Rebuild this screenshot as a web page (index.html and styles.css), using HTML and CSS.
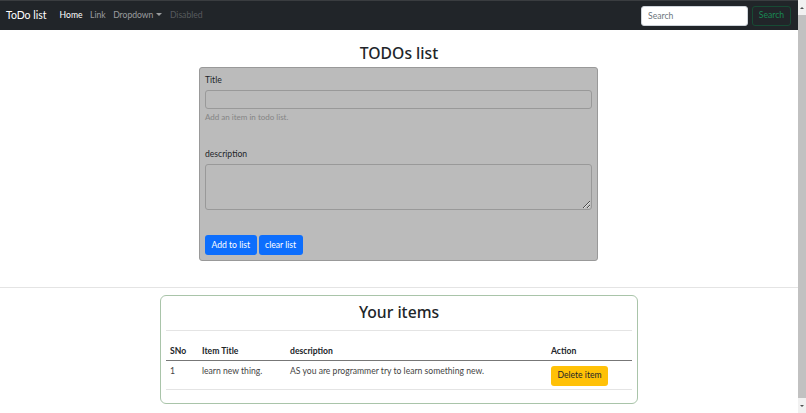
FILE: index.html
```html
<!DOCTYPE html>
<html lang="en">
<head>
<meta charset="utf-8">
<title>ToDo list</title>
<link rel="stylesheet" href="styles.css">
</head>
<body>
<div class="page">
  <nav class="navbar">
    <a class="brand">ToDo list</a>
    <ul class="nav">
      <li class="active">Home</li>
      <li>Link</li>
      <li class="dropdown">Dropdown<span class="caret"></span></li>
      <li class="disabled">Disabled</li>
    </ul>
    <form class="search">
      <input class="search-input" placeholder="Search">
      <button type="button" class="search-btn">Search</button>
    </form>
  </nav>
  <main>
    <h1>TODOs list</h1>
    <form class="todo-form">
      <label class="label">Title</label>
      <input class="field">
      <div class="help">Add an item in todo list.</div>
      <label class="label desc-label">description</label>
      <textarea class="field area"></textarea>
      <div class="actions">
        <button type="button" class="btn">Add to list</button>
        <button type="button" class="btn">clear list</button>
      </div>
    </form>
    <hr class="divider">
    <section class="items">
      <h2>Your items</h2>
      <hr class="inner">
      <table>
        <thead>
          <tr><th class="c1">SNo</th><th class="c2">Item Title</th><th class="c3">description</th><th>Action</th></tr>
        </thead>
        <tbody>
          <tr><td>1</td><td>learn new thing.</td><td>AS you are programmer try to learn something new.</td><td class="action-cell"><button type="button" class="btn warn">Delete item</button></td></tr>
        </tbody>
      </table>
    </section>
  </main>
</div>
<aside class="scrollbar">
  <span class="arrow up"></span>
  <span class="thumb"></span>
  <span class="arrow down"></span>
</aside>
</body>
</html>
```
FILE: styles.css
```css
* { box-sizing: border-box; }
html, body { margin: 0; height: 413px; overflow: hidden; }
body { display: flex; background: #fff; color: #212529; font: 8.6px/12.75px Lato, "Open Sans", sans-serif; }
.page { width: 798px; flex: none; }
.navbar { height: 30px; background: #212529; border-top: 1px solid #3a3d40; display: flex; align-items: center; padding: 0 7px 0 6px; }
.brand { color: #fff; font-size: 10.5px; margin-right: 13px; }
.nav { display: flex; list-style: none; margin: 0; padding: 0; gap: 7.5px; color: rgba(255,255,255,.55); }
.nav .active { color: #fff; }
.nav .disabled { color: rgba(255,255,255,.25); }
.caret { display: inline-block; margin-left: 3px; vertical-align: 2px; border: 3px solid transparent; border-top-color: currentColor; border-bottom: 0; }
.search { display: flex; gap: 4px; margin-left: auto; }
.search-input { width: 107px; height: 20px; border: 1px solid #ced4da; border-radius: 3px; padding: 0 6px; font: inherit; }
.search-input::placeholder { color: #6c757d; }
.search-btn { width: 39px; height: 20px; background: transparent; border: 1px solid #174a34; border-radius: 3px; color: #198754; font: inherit; padding: 0; }
h1, h2 { font-family: "Noto Sans", "Open Sans", sans-serif; font-weight: 500; margin: 0; text-align: center; line-height: 21px; }
h1 { padding-top: 13px; height: 37px; font-size: 15.7px; }
.todo-form { width: 399px; height: 194px; margin: 0 0 0 199px; background: #bbb; border: 1px solid #999; border-radius: 3px; padding: 5px; display: flex; flex-direction: column; }
.label { display: block; height: 17px; padding-top: 1px; }
.field { display: block; width: 100%; height: 19px; background: #bbb; border: 1px solid #999; border-radius: 3px; flex: none; }
.help { color: #858585; font-size: 8px; margin-top: 2px; height: 29px; }
.desc-label { margin-top: 7px; padding-top: 1px; }
.area { height: 46px; }
.actions { display: flex; gap: 2px; margin-top: 25px; }
.btn { background: #0d6efd; border: 0; border-radius: 3px; color: #fff; font: inherit; padding: 0 6.5px; height: 20px; }
.divider { margin: 26px 0 7px; border: 0; border-top: 1px solid #e4e4e4; }
.items { width: 478px; height: 109px; margin-left: 160px; border: 1px solid #a9c4a9; border-radius: 6px; padding: 0 5px; }
h2 { padding-top: 6px; height: 34px; font-size: 15.7px; }
.inner { margin: 0; border: 0; border-top: 1px solid #e4e4e4; }
table { width: 100%; margin-top: 10px; border-collapse: collapse; table-layout: fixed; }
th { text-align: left; font-weight: 700; padding: 4px 4px 2px; height: 19px; border-bottom: 1px solid #777; }
td { padding: 4px 4px 3px; height: 29px; border-bottom: 1px solid #e4e4e4; vertical-align: top; color: #444; }
.action-cell { padding-top: 5px; }
.c1 { width: 32px; }
.c2 { width: 88px; }
.c3 { width: 261px; }
.warn { background: #ffc107; color: #212529; }
.scrollbar { width: 8px; height: 413px; flex: none; background: #f1f1f1; display: flex; flex-direction: column; align-items: center; }
.thumb { width: 100%; height: 383px; background: #c1c1c1; }
.arrow { flex: 1; display: flex; align-items: center; }
.arrow::before { content: ""; border: 2px solid transparent; }
.arrow.up::before { border-bottom-color: #505050; border-top: 0; }
.arrow.down::before { border-top-color: #505050; border-bottom: 0; }
```
